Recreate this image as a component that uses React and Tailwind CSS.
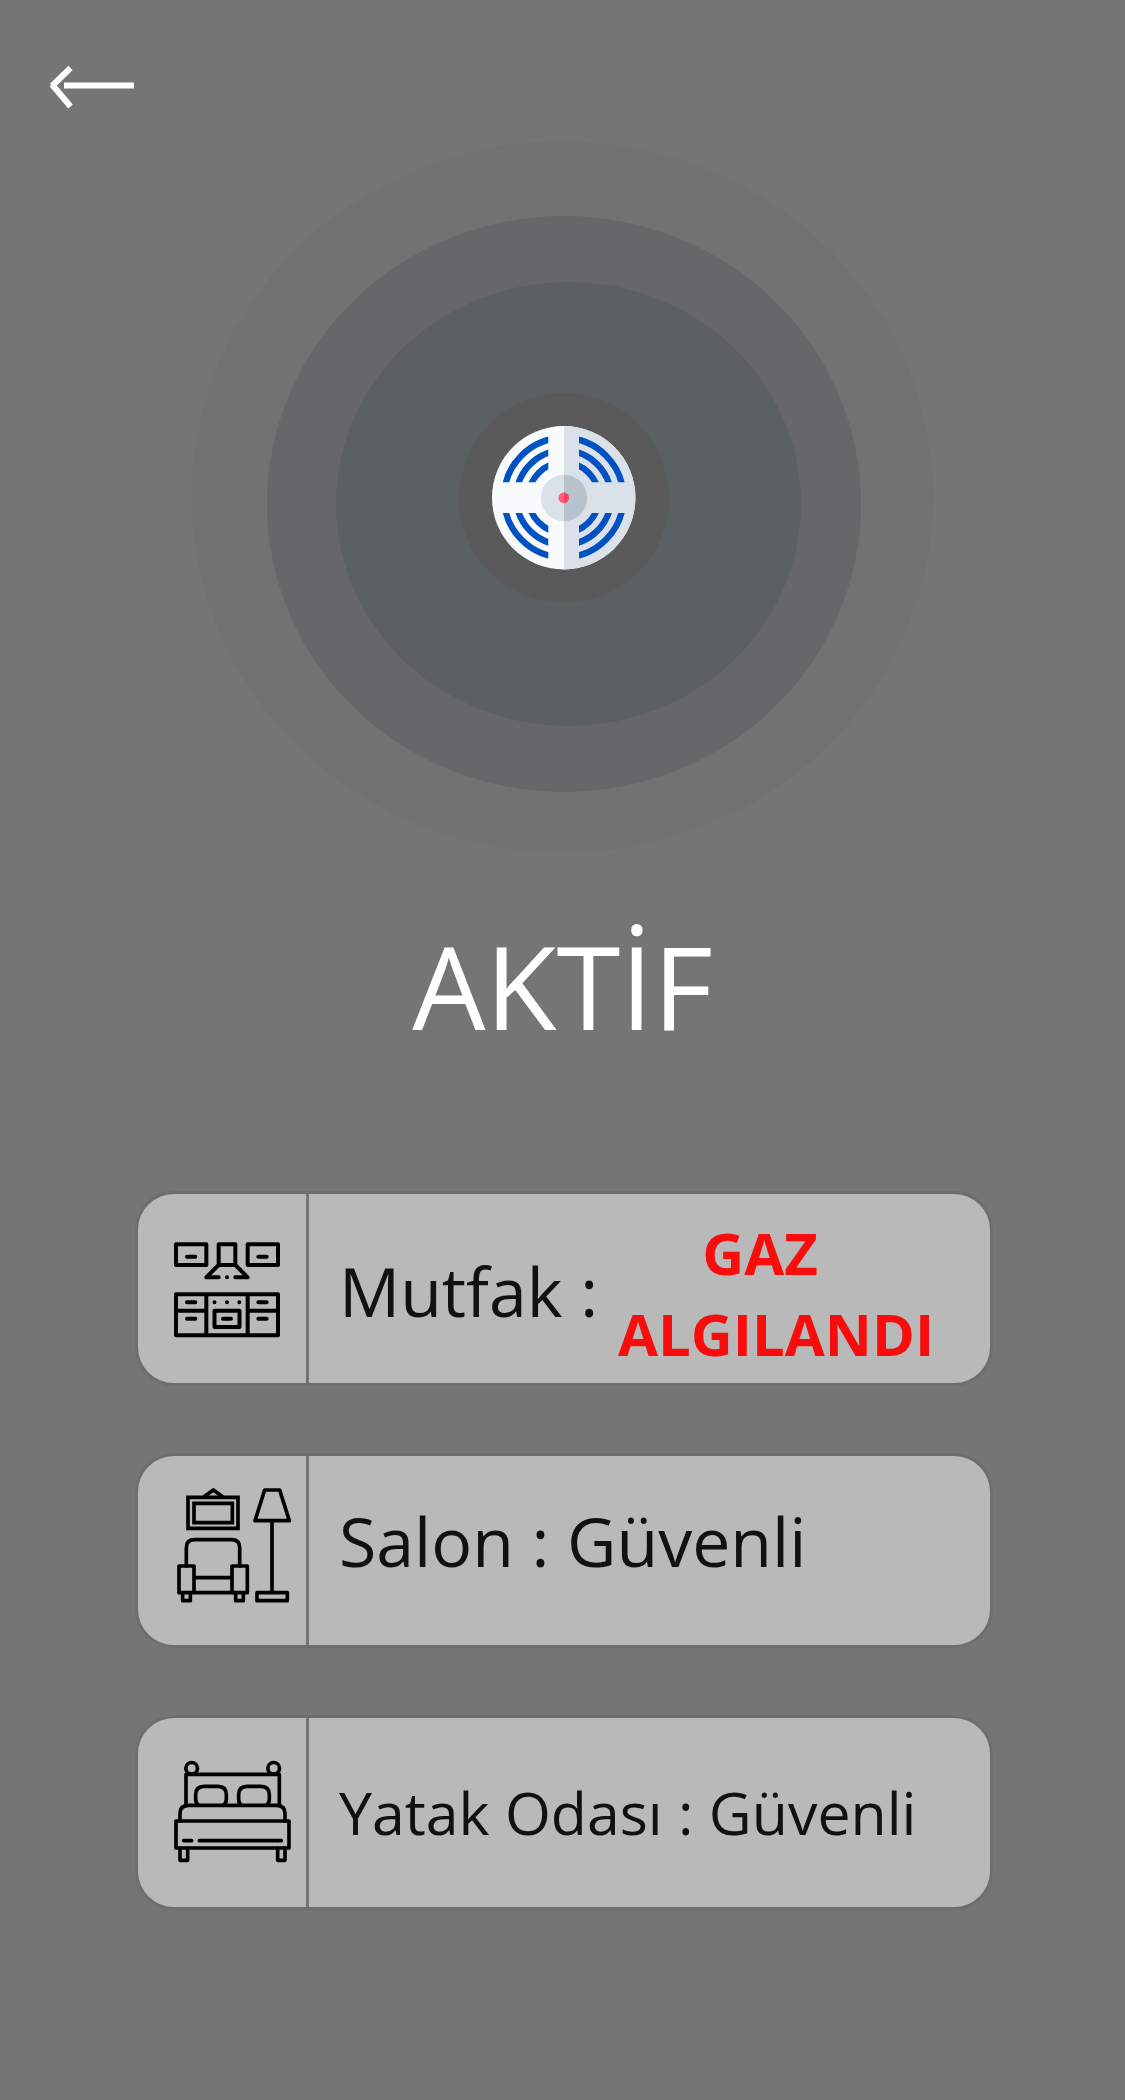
import React from "react";

function BackArrow() {
  return (
    <svg className="h-12 w-[90px]" viewBox="1 0 90 48" fill="none" stroke="white" strokeWidth="6" aria-hidden="true">
      <path d="M23.500 6 5 24M5 22.500 23.500 44.500" />
      <path d="M17 23.500H87" />
    </svg>
  );
}

function Vents() {
  return (
    <g fill="none" stroke="#0052c2" strokeWidth="6.300">
      <circle cx="563.700" cy="497.600" r="59.600" />
      <circle cx="563.700" cy="497.600" r="47.300" />
      <circle cx="563.700" cy="497.600" r="35.200" />
    </g>
  );
}

function Detector() {
  return (
    <svg className="w-full max-w-[742px]" viewBox="192 141 742 712" role="img" aria-label="Gaz dedektörü">
      <defs>
        <clipPath id="quarters">
          <path d="M490 420h58.300v62.300H490zM579 420h62v62.300h-62zM490 513h58.300v62H490zM579 513h62v62h-62z" />
        </clipPath>
        <clipPath id="right">
          <path d="M564 420h80v160h-80z" />
        </clipPath>
      </defs>
      <ellipse cx="562.500" cy="497" rx="371" ry="356" fill="#727272" />
      <ellipse cx="564" cy="504" rx="297" ry="288" fill="#666769" />
      <ellipse cx="568.500" cy="504" rx="232.500" ry="222" fill="#5b6062" />
      <circle cx="564" cy="498" r="105" fill="#5a5a5a" />
      <circle cx="563.700" cy="497.700" r="71.700" fill="#f8fafc" />
      <circle cx="563.700" cy="497.700" r="71.700" fill="#dae1e9" clipPath="url(#right)" />
      <g clipPath="url(#quarters)">
        <Vents />
      </g>
      <circle cx="564" cy="498" r="23.200" fill="#dae1e9" />
      <circle cx="564" cy="498" r="23.200" fill="#b7c2cd" clipPath="url(#right)" />
      <circle cx="563.700" cy="497.700" r="5.200" fill="#ff5d7a" />
      <circle cx="563.700" cy="497.700" r="5.200" fill="#ff3d58" clipPath="url(#right)" />
    </svg>
  );
}

function RoomIcon({ viewBox, strokeWidth, children }) {
  return (
    <svg
      className="size-[120px] overflow-visible"
      viewBox={viewBox}
      fill="none"
      stroke="black"
      strokeWidth={strokeWidth}
      strokeLinecap="round"
      strokeLinejoin="round"
      aria-hidden="true"
    >
      {children}
    </svg>
  );
}

function KitchenIcon() {
  return (
    <RoomIcon viewBox="132 146 360 360" strokeWidth="12">
      <path d="M138 192h91v62h-91zM353 192h91v62h-91zM266 192h50v62h-50z" />
      <path d="M171 229h25M385 229h25M266 254l-37 37h37M316 254l37 37h-37M291 291v.1" />
      <path d="M138 342h306v123H138zM229 342v123M353 342v123M138 391h91M353 391h91" />
      <path d="M171 366h25M385 366h25M171 415h25M385 415h25M279 415h24" />
      <path d="M253.500 391h75v49h-75zM253.500 366v.1M291 366v.1M328 366v.1" />
    </RoomIcon>
  );
}

function LivingRoomIcon() {
  return (
    <RoomIcon viewBox="132 152 360 360" strokeWidth="11">
      <path d="M174 171h150v93H174zM192 189h115v58H192z" strokeLinejoin="miter" />
      <path d="M224 168l26-19 26 19" />
      <path d="M169 377v-55q0-24 24-24h112q24 0 24 24v55" />
      <path d="M147 377h45v80h-45zM306 377h46v80h-46zM192 412h114M192 457h114" />
      <path d="M158 461v20h23v-20M317 461v20h23v-20" />
      <path d="M404 149h45l29 92H375zM426 241v216M381 457h91v24h-91z" />
    </RoomIcon>
  );
}

function BedIcon() {
  return (
    <RoomIcon viewBox="132 160 360 360" strokeWidth="11">
      <circle cx="185" cy="206" r="17.500" />
      <circle cx="431" cy="206" r="17.500" />
      <path d="M168 318v-94h280v94" />
      <path d="M206 317q-9-6-9-18v-14q0-25 25-25h42q25 0 25 25v14q0 12-9 18M335 317q-9-6-9-18v-14q0-25 25-25h42q25 0 25 25v14q0 12-9 18" />
      <path d="M150 364v-22q0-25 25-25h265q25 0 25 25v22" />
      <path d="M138 364h339v81H138zM161 423h24M208 423h246" />
      <path d="M150 445v37h23v-37M443 445v37h22v-37" />
    </RoomIcon>
  );
}

function RoomCard({ icon, children }) {
  return (
    <li className="flex min-h-[195px] rounded-[39px] border-[3px] border-[#6e6e6e] bg-[#b9b9b9]">
      <div className="flex w-[171px] shrink-0 items-center border-r-[3px] border-[#757575] pl-9">{icon}</div>
      <div className="flex flex-1 items-center pl-[30px] whitespace-nowrap">{children}</div>
    </li>
  );
}

export default function App() {
  return (
    <main className="flex min-h-screen flex-col bg-[#757575] font-['Open_Sans',sans-serif] text-[#111]">
      <header className="flex h-[141px] items-start px-12 pt-[62px]">
        <button type="button" aria-label="Geri" className="cursor-pointer">
          <BackArrow />
        </button>
      </header>
      <section className="flex flex-col items-center">
        <Detector />
        <h1 className="mt-[52px] text-[116px] leading-[160px] text-white">AKTİF</h1>
      </section>
      <ul className="mx-auto mt-[126px] flex w-full max-w-[861px] flex-col gap-[67px] pb-12 pl-[3px]">
        <RoomCard icon={<KitchenIcon />}>
          <p className="pt-1 text-[68px] leading-[81px]">Mutfak :</p>
          <strong className="pt-2 pl-5 text-center text-[58px] leading-[81px] font-bold text-[#f80c0c]">
            <span className="block pr-8">GAZ</span>
            <span className="block">ALGILANDI</span>
          </strong>
        </RoomCard>
        <RoomCard icon={<LivingRoomIcon />}>
          <p className="pb-5 text-[68px] leading-[81px]">Salon : Güvenli</p>
        </RoomCard>
        <RoomCard icon={<BedIcon />}>
          <p className="text-[59px] leading-[81px]">Yatak Odası : Güvenli</p>
        </RoomCard>
      </ul>
    </main>
  );
}
